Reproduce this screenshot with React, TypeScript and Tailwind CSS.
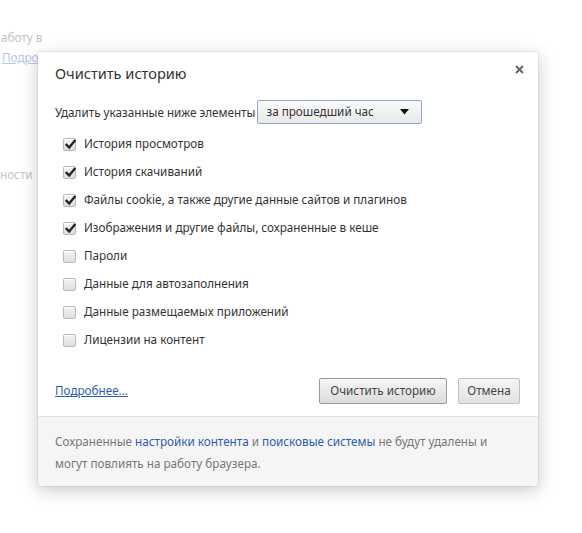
import React from "react";

const items: { label: string; checked: boolean }[] = [
  { label: "История просмотров", checked: true },
  { label: "История скачиваний", checked: true },
  { label: "Файлы cookie, а также другие данные сайтов и плагинов", checked: true },
  { label: "Изображения и другие файлы, сохраненные в кеше", checked: true },
  { label: "Пароли", checked: false },
  { label: "Данные для автозаполнения", checked: false },
  { label: "Данные размещаемых приложений", checked: false },
  { label: "Лицензии на контент", checked: false },
];

function Check({ checked }: { checked: boolean }) {
  return (
    <span className="relative flex h-[13px] w-[13px] items-center justify-center rounded-[2px] border border-[#b8b8b8] bg-gradient-to-b from-[#f4f4f4] to-[#dedede] shadow-[inset_0_1px_0_#fff]">
      {checked && (
        <svg width="11" height="11" viewBox="0 0 11 11" className="absolute left-[1px] top-[0px]">
          <path d="M1.5 5.8 L4.2 8.5 L9.6 1.8" fill="none" stroke="#222" strokeWidth="2.3" strokeLinecap="square" />
        </svg>
      )}
    </span>
  );
}

export default function App() {
  return (
    <div className="relative h-[533px] w-full overflow-hidden bg-white text-[11.7px] text-[#333]" style={{ fontFamily: '"Noto Sans", "Open Sans", sans-serif' }}>
      <div className="flex flex-col text-[#c4c4c4]">
        <div className="ml-[1px] mt-[28px] h-[18px] leading-[18px]">аботу в</div>
        <div className="ml-[2px] mt-[2px] h-[18px] leading-[18px] text-[#b5c8e4] underline">Подро</div>
        <div className="ml-[0px] mt-[99px] h-[18px] leading-[18px]">ности</div>
      </div>

      <div className="absolute left-[38px] top-[52px] w-[500px] bg-white shadow-[0_4px_16px_rgba(0,0,0,0.22),0_0_1px_rgba(0,0,0,0.3)]">
        <div className="px-[17px] pt-[10px]">
          <div className="flex items-center justify-between">
            <div className="text-[14.6px] leading-[22px] text-[#333]">Очистить историю</div>
            <svg width="9" height="9" viewBox="0 0 9 9" className="mr-[-3px] mt-[-8px]">
              <path d="M1 1 L8 8 M8 1 L1 8" stroke="#666" strokeWidth="2" />
            </svg>
          </div>
          <div className="mt-[16px] flex items-center gap-[2px]">
            <span className="leading-[24px]">Удалить указанные ниже элементы</span>
            <div className="flex h-[24px] w-[165px] items-center justify-between rounded-[2px] border border-[#8aa8d4] bg-gradient-to-b from-[#fbfbfb] to-[#e8e8e8] pl-[8px] pr-[12px]">
              <span>за прошедший час</span>
              <svg width="9" height="6" viewBox="0 0 9 6">
                <path d="M0 0 L9 0 L4.5 5.5 Z" fill="#111" />
              </svg>
            </div>
          </div>
          <div className="mt-[6px] flex flex-col pl-[8px]">
            {items.map((it) => (
              <label key={it.label} className="flex h-[28px] items-center gap-[8px]">
                <Check checked={it.checked} />
                <span>{it.label}</span>
              </label>
            ))}
          </div>
          <div className="mt-[24px] flex items-center justify-between pb-[12px]">
            <a className="text-[#2a5db0] underline">Подробнее...</a>
            <div className="flex gap-[11px] pr-[1px]">
              <button className="h-[26px] w-[128px] rounded-[2px] border border-[#9a9a9a] bg-gradient-to-b from-[#f6f6f6] to-[#dcdcdc] text-[#444]">Очистить историю</button>
              <button className="h-[26px] w-[62px] rounded-[2px] border border-[#c0c0c0] bg-gradient-to-b from-[#f6f6f6] to-[#e2e2e2] text-[#444]">Отмена</button>
            </div>
          </div>
        </div>
        <div className="border-t border-[#e2e2e2] bg-[#f5f5f5] px-[17px] pb-[12px] pt-[13px] leading-[22px] text-[#777]">
          Сохраненные <a className="text-[#2a5db0]">настройки контента</a> и <a className="text-[#2a5db0]">поисковые системы</a> не будут удалены и
          <br />
          могут повлиять на работу браузера.
        </div>
      </div>
    </div>
  );
}
